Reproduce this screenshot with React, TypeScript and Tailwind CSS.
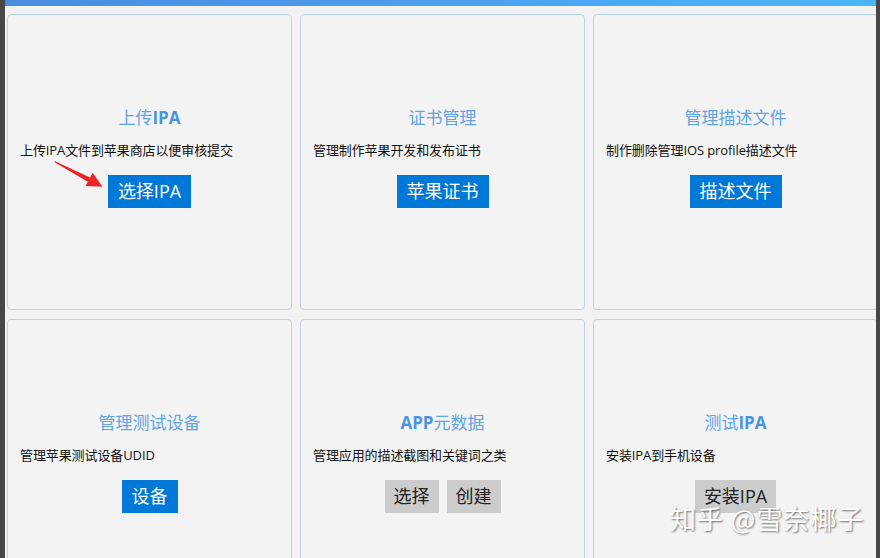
import React from "react";

type Btn = { label: string; kind: "blue" | "gray" };
type Card = { title: React.ReactNode; desc: string; buttons: Btn[] };

const cards: Card[] = [
  {
    title: (
      <>
        上传<span className="font-bold text-[#4b93e2]">IPA</span>
      </>
    ),
    desc: "上传IPA文件到苹果商店以便审核提交",
    buttons: [{ label: "选择IPA", kind: "blue" }],
  },
  { title: "证书管理", desc: "管理制作苹果开发和发布证书", buttons: [{ label: "苹果证书", kind: "blue" }] },
  { title: "管理描述文件", desc: "制作删除管理IOS profile描述文件", buttons: [{ label: "描述文件", kind: "blue" }] },
  { title: "管理测试设备", desc: "管理苹果测试设备UDID", buttons: [{ label: "设备", kind: "blue" }] },
  {
    title: (
      <>
        <span className="font-bold text-[#4b93e2]">APP</span>元数据
      </>
    ),
    desc: "管理应用的描述截图和关键词之类",
    buttons: [
      { label: "选择", kind: "gray" },
      { label: "创建", kind: "gray" },
    ],
  },
  {
    title: (
      <>
        测试<span className="font-bold text-[#4b93e2]">IPA</span>
      </>
    ),
    desc: "安装IPA到手机设备",
    buttons: [{ label: "安装IPA", kind: "gray" }],
  },
];

function CardView({ card }: { card: Card }) {
  return (
    <div className="flex flex-col rounded-[4px] border border-[#bcd3ee] bg-[#f3f3f3] px-[12px] pt-[92px]">
      <div className="text-center text-[17px] leading-[22px] text-[#62a3e6]">{card.title}</div>
      <div className="mt-[12px] text-[13px] leading-[18px] tracking-[-0.1px] text-[#111]">{card.desc}</div>
      <div className="mt-[16px] flex justify-center gap-[8px]">
        {card.buttons.map((b) => (
          <div
            key={b.label}
            className={
              b.kind === "blue"
                ? "flex h-[33px] items-center bg-[#0078d7] px-[10px] text-[18px] text-white"
                : "flex h-[33px] items-center bg-[#cccccc] px-[9px] text-[18px] text-[#222]"
            }
          >
            {b.label}
          </div>
        ))}
      </div>
    </div>
  );
}

export default function App() {
  return (
    <div
      className="relative flex h-[558px] w-[880px] overflow-hidden bg-[#f2f2f2]"
      style={{ fontFamily: '"Open Sans", "Noto Sans CJK SC", sans-serif' }}
    >
      <div className="w-[5px] shrink-0 bg-[#474747]" />
      <div className="flex min-w-0 flex-1 flex-col overflow-hidden">
        <div className="h-[6px] shrink-0 bg-linear-to-r from-[#4a8ce0] via-[#4c9ff0] to-[#4bb6f6]" />
        <div className="grid grid-cols-[285px_285px_285px] grid-rows-[296px_296px] gap-x-[8px] gap-y-[9px] pl-[2px] pt-[8px]">
          {cards.map((c, i) => (
            <CardView key={i} card={c} />
          ))}
        </div>
      </div>
      <div className="w-[4px] shrink-0 bg-[#474747]" />

      <svg className="absolute left-0 top-0" width="120" height="200" viewBox="0 0 120 200">
        <polygon points="54.5,161 90,177.5 88.2,182 55,162.6" fill="#ec2424" />
        <polygon points="102.5,186.8 92.6,172.8 85.6,186" fill="#ec2424" />
      </svg>

      <div
        className="absolute left-[670px] top-[500px] text-[26px] leading-[36px] tracking-[1px] text-white [text-shadow:1px_1px_2px_rgba(0,0,0,0.55)]"
        style={{ fontFamily: '"Noto Sans CJK SC", sans-serif' }}
      >
        知乎 @雪奈椰子
      </div>
    </div>
  );
}
